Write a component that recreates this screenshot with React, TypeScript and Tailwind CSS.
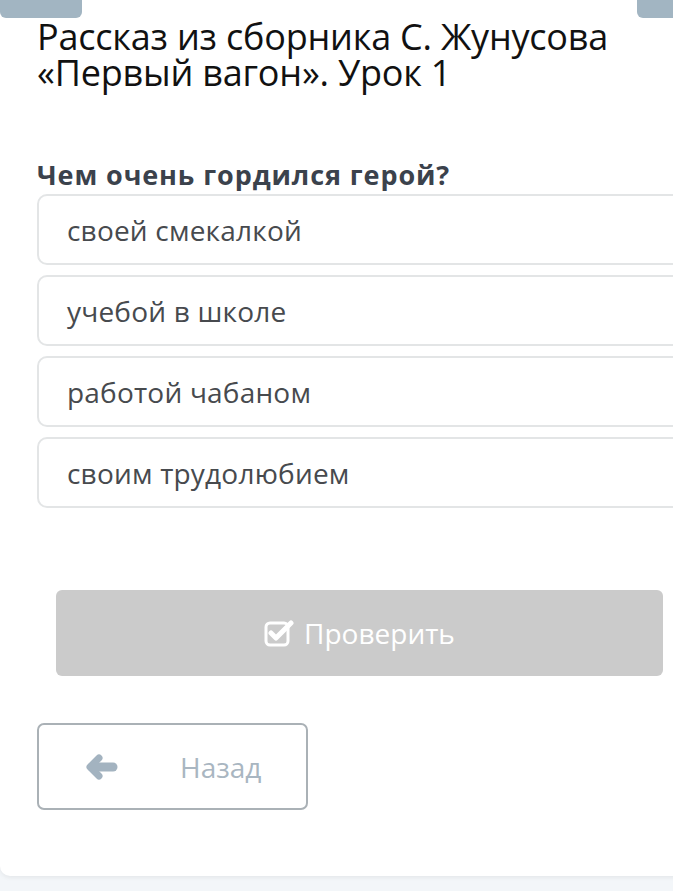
import React from "react";

const options = ["своей смекалкой", "учебой в школе", "работой чабаном", "своим трудолюбием"];

export default function App() {
  return (
    <div className="w-[673px] h-[891px] overflow-hidden bg-[#f3f6f9]" style={{ fontFamily: '"Open Sans", sans-serif' }}>
      <div className="relative bg-white h-[876px] w-[700px] rounded-bl-[10px] shadow-[0_2px_4px_rgba(0,0,0,0.06)]">
        <div className="absolute left-0 top-0 w-[82px] h-[18px] bg-[#a2b5c2] rounded-b-[6px]" />
        <div className="absolute left-[637px] top-0 w-[60px] h-[18px] bg-[#a2b5c2] rounded-bl-[6px]" />
        <div className="pl-[37px] pt-[19px]">
          <h1 className="text-[36px] leading-[36px] text-[#111] tracking-[-0.2px]">
            Рассказ из сборника С. Жунусова
            <br />
            «Первый вагон». Урок 1
          </h1>
          <div className="mt-[69px] text-[27px] leading-[30px] font-bold text-[#3b424c] tracking-[0.9px]">Чем очень гордился герой?</div>
          <div className="mt-[4px] flex flex-col gap-[10px]">
            {options.map((o) => (
              <div key={o} className="h-[71px] border-2 border-[#e3e5e6] rounded-[10px] flex items-center pl-[28px] text-[28px] tracking-[0.2px] text-[#474a4e]">
                {o}
              </div>
            ))}
          </div>
        </div>
        <div className="pl-[56px] pr-[37px] mt-[82px]">
          <div className="w-[607px] h-[86px] bg-[#cbcbcb] rounded-[6px] flex items-center justify-center gap-[10px] text-white text-[28px]">
            <svg width="30" height="28" viewBox="0 0 30 28" fill="none">
              <rect x="2" y="4" width="22" height="22" rx="4" stroke="white" strokeWidth="3" />
              <path d="M7 14 L12 19 L27 4" stroke="white" strokeWidth="5" strokeLinecap="round" strokeLinejoin="round" />
            </svg>
            <span>Проверить</span>
          </div>
        </div>
        <div className="pl-[37px] mt-[47px]">
          <div className="w-[271px] h-[87px] border-2 border-[#aab1b6] rounded-[7px] flex items-center text-[#a9b6c1]">
            <svg className="ml-[47px]" width="32" height="26" viewBox="0 0 32 26">
              <path d="M13 4 L4 13 L13 22" stroke="#a3b3c0" strokeWidth="7" strokeLinecap="round" strokeLinejoin="round" fill="none" />
              <path d="M6 13 L27 13" stroke="#a3b3c0" strokeWidth="9" strokeLinecap="round" />
            </svg>
            <span className="ml-[62px] text-[28px]">Назад</span>
          </div>
        </div>
      </div>
    </div>
  );
}
